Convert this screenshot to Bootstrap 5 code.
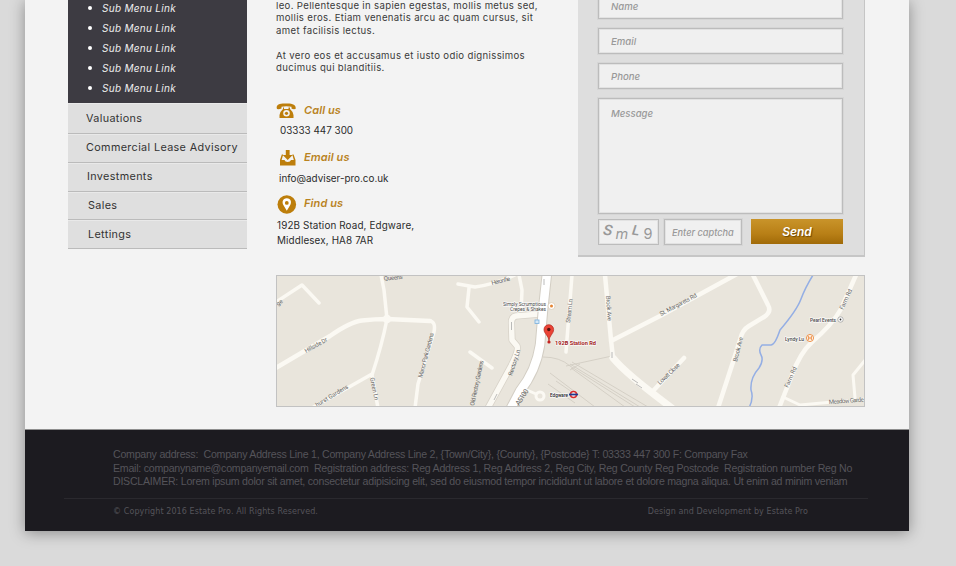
<!DOCTYPE html>
<html lang="en">
<head>
<meta charset="utf-8">
<meta name="viewport" content="width=device-width, initial-scale=1">
<title>Estate Pro - Contact</title>
<link href="https://cdn.jsdelivr.net/npm/bootstrap@5.3.0/dist/css/bootstrap.min.css" rel="stylesheet">
<style>
body{background:#dadada;font-family:Inter,"Open Sans",sans-serif;font-size:9.6px;color:#3a3a3a;height:566px;overflow:hidden}
.sheet{width:884px;height:531px;margin-left:25px;background:#f3f3f3;box-shadow:0 2px 14px rgba(0,0,0,.36)}
.main-area{height:430px;padding-left:43px;border-bottom:1px solid #8e8e8e}
.side{width:179px}
.submenu{background:#3d3b42;height:103px;color:#eee;font-style:italic;font-size:10px;letter-spacing:.29px;overflow:hidden}
.submenu ul{margin-top:-2px}
.submenu li{height:20.1px;line-height:20px;gap:10.5px;padding-left:19.500px}
.submenu li::before{content:"";width:4px;height:4px;border-radius:50%;background:#fff}
.side .list-group-item{background:#dfdfdf;color:#333;font-size:10.8px;line-height:14px;letter-spacing:.36px;padding:0 0 0 19px;height:28.8px;border:0;border-bottom:1px solid #bbb;border-top:1px solid #e9e9e9;display:flex;align-items:center;white-space:nowrap}
.side .list-group-item:first-child{height:31px}
.side .list-group-item:nth-child(-n+2){padding-left:18px}
.side .list-group-item:nth-child(n+4){padding-left:20px}
.side .list-group-item:last-child{border-bottom:1px solid #bbb}
.content{margin-left:29px;width:590px}
.upper{height:275px}
.copy{width:302px}
.copy p{line-height:12.45px;margin:0 0 12.4px;letter-spacing:.34px;white-space:nowrap}
.copy .lead-in{margin-top:0}
.ways{padding-top:12px}
.way h2{font-size:11px;font-style:italic;font-weight:600;color:#b9831f;margin:0;letter-spacing:.1px}
.way .head{height:24px;gap:7px}
.way .head svg{width:21px;height:20px}
.way .txt{font-size:9.9px;line-height:14.5px;white-space:nowrap;color:#2b2b2b}
.way .info-line{padding-left:3px;padding-top:1px}
.way .addr{padding:2px 0 0 1px;letter-spacing:.12px}
.way.second{margin-top:8px}
.way.third{margin-top:7px}
.enquiry{width:287px;height:257px;background:#dedede;border-right:1px solid #c5c5c5;border-bottom:2px solid #c6c6c6;padding:0 21px 0 20px}
.enquiry .form-control{border:1px solid #bcbcbc;outline:1px solid rgba(0,0,0,.035);outline-offset:0;border-radius:0;background:#f0f0f0;font-size:9.6px;font-style:italic;font-weight:500;padding:0 12px;height:26px;min-height:0;line-height:14px;resize:none;box-shadow:inset 0 0 0 1px #e2e2e2}
.enquiry .form-control::placeholder{color:#999;opacity:1}
.enquiry textarea.form-control{height:116px;padding-top:8px}
.enquiry .first-field{margin-top:-7px}
.enquiry .mt-field{margin-top:9px}
.captcha-row{margin-top:5px;gap:5px}
.code{width:61px;height:26px;border:1px solid #bcbcbc;box-shadow:inset 0 0 0 1px #e2e2e2;background:#f0f0f0}
.enquiry .form-control.cap{width:78px;padding:0 0 0 7px;font-size:9.2px}
.btn-send{width:92px;height:25px;padding:0;border-radius:0;border:0;background:linear-gradient(#c9942a,#b87f16 60%,#a06a08);color:#fff;font-size:12px;line-height:26px;font-weight:600;font-style:italic;text-shadow:1px 1px 1px #6d4700}
.map svg{display:block}
.foot{height:101px;background:#1c1b20;color:#55545a;font-family:"Liberation Sans",Arial,sans-serif;font-size:10.6px;padding:18px 0 0 88px}
.foot .legal{line-height:13.6px;white-space:pre;letter-spacing:-.238px}
.foot .bottom{margin:9px 41px 0 -49px;border-top:1px solid #2a292e;padding:7px 60px 0 49px;font-family:"DejaVu Sans",Verdana,sans-serif;font-size:8px;line-height:12px;letter-spacing:.09px}
</style>
<script src="https://cdn.jsdelivr.net/npm/bootstrap@5.3.0/dist/js/bootstrap.bundle.min.js"></script>
</head>
<body>
<div class="sheet">
  <main class="main-area d-flex">
    <nav class="side">
      <div class="submenu">
        <ul class="list-unstyled mb-0">
          <li class="d-flex align-items-center">Sub Menu Link</li>
          <li class="d-flex align-items-center">Sub Menu Link</li>
          <li class="d-flex align-items-center">Sub Menu Link</li>
          <li class="d-flex align-items-center">Sub Menu Link</li>
          <li class="d-flex align-items-center">Sub Menu Link</li>
        </ul>
      </div>
      <div class="list-group list-group-flush rounded-0">
        <a class="list-group-item">Valuations</a>
        <a class="list-group-item">Commercial Lease Advisory</a>
        <a class="list-group-item">Investments</a>
        <a class="list-group-item">Sales</a>
        <a class="list-group-item">Lettings</a>
      </div>
    </nav>
    <div class="content">
      <div class="upper d-flex">
        <div class="copy">
          <p class="lead-in">leo. Pellentesque in sapien egestas, mollis metus sed,<br>mollis eros. Etiam venenatis arcu ac quam cursus, sit<br>amet facilisis lectus.</p>
          <p>At vero eos et accusamus et iusto odio dignissimos<br>ducimus qui blanditiis.</p>
          <div class="ways">
            <div class="way">
              <div class="head d-flex align-items-center">
                <svg viewBox="0 0 21 20"><path fill="#bd7e0b" fill-rule="evenodd" d="M1 8C-.8 3 5 2.500 10 2.500S20.800 3 19.500 8Q17 8.500 15.500 7.500V5.800Q10 4.500 5.500 5.800V7.500Q3 8.500 1 8ZM7 6.500H8V8H12.500V6.500H14V8Q16.500 10 17.500 14V17H3.500V14Q4.500 10 7 8ZM10.500 9A3.300 3.300 0 1 0 10.500 15.600A3.300 3.300 0 1 0 10.500 9Z"/><circle cx="10.500" cy="12.300" r="1.600" fill="#bd7e0b"/></svg>
                <h2>Call us</h2>
              </div>
              <div class="txt ps-1">03333 447 300</div>
            </div>
            <div class="way second">
              <div class="head d-flex align-items-center">
                <svg viewBox="0 0 21 20"><path fill="#bd7e0b" d="M9.800 2H13.600V7H16.700L11.700 12 6.700 7H9.800ZM5.800 6.500H7.200L5.600 12H8.500Q9 14 11.700 14T15 12H17.800L16.300 6.500H17.600L19.500 12V17.500H4V12Z"/></svg>
                <h2>Email us</h2>
              </div>
              <div class="txt info-line">info@adviser-pro.co.uk</div>
            </div>
            <div class="way third">
              <div class="head d-flex align-items-center">
                <svg viewBox="0 0 21 20"><circle cx="10.800" cy="10.500" r="9.300" fill="#bd7e0b"/><path fill="#fff" fill-rule="evenodd" d="M10.800 4.200C6.500 4.200 5.700 8.500 7.500 11.300L10.800 16.700 14.100 11.300C15.900 8.500 15.100 4.200 10.800 4.200ZM10.800 7A1.900 1.900 0 1 1 10.800 10.800A1.900 1.900 0 1 1 10.800 7Z"/></svg>
                <h2>Find us</h2>
              </div>
              <div class="txt addr">192B Station Road, Edgware,<br>Middlesex, HA8 7AR</div>
            </div>
          </div>
        </div>
        <form class="enquiry">
          <input class="form-control first-field" placeholder="Name">
          <input class="form-control mt-field" placeholder="Email">
          <input class="form-control mt-field" placeholder="Phone">
          <textarea class="form-control mt-field" placeholder="Message"></textarea>
          <div class="d-flex captcha-row">
            <svg class="code p-0" viewBox="0 0 57 22" fill="#999" font-style="italic"><text x="4" y="14" font-size="14" font-weight="600" transform="rotate(8 8 10)">S</text><text x="16" y="18" font-size="14">m</text><text x="32" y="14" font-size="13" font-weight="600" transform="rotate(8 36 9)">L</text><text x="43" y="18" font-size="14" font-style="normal">9</text></svg>
            <input class="form-control cap" placeholder="Enter captcha">
            <button type="button" class="btn btn-send ms-auto">Send</button>
          </div>
        </form>
      </div>
      <div class="map">
        <svg width="590" height="133" viewBox="276 275 590 133" font-family="Roboto,sans-serif" font-size="6" fill="#666">
          <rect x="276" y="275" width="589" height="132" fill="#e9e5dc"/>
          <g fill="none" stroke="#cfcac0" stroke-width=".8">
            <path d="M543 357Q560 357 570 366L635 407M570 364L640 407M571 368L625 407M572 362L648 407M550 373L595 407M548 384L575 403M556 381L572 392M566 366L612 356M570 370L580 364"/>
          </g>
          <g fill="none" stroke="#fbf9f3" stroke-linejoin="round" stroke-linecap="round">
            <path stroke-width="3.500" d="M276 302L302 285 319 303M381 275L384 290 387 319M387 319Q382 345 372 375L378 408M372 374L312 408M430 321Q436 322 434 332L418 384 415 408"/>
            <path stroke-width="4.500" d="M274 369L330 336Q350 322 362 320.500 375 319 387 319L430 321"/>
            <circle cx="387" cy="319" r="3" stroke-width="2.500"/>
            <path stroke-width="3.500" d="M458 284L475 287Q492 285 515 275M469 288L467 307 479 322M470 352L492 368M519 275L522 290 521 314M572 275L566 352"/>
            <path stroke-width="4.500" d="M605 275L611 340 613 358M611 341L660 316 737 274M653 391L684 358"/>
            <path stroke-width="7" d="M613 358Q626 374 672 408"/>
            <path stroke-width="4.500" d="M753 275L768 305Q772 312 764 317L749 326Q742 330 740 340L733 362 718 408"/>
            <path stroke-width="4.500" d="M856 275L841 309Q832 325 812 342 800 353 792 375L779 408"/>
            <path stroke-width="3" d="M783 397L800 405 866 399M866 359L853 375 855 398"/>
            <path stroke="#d7d2c8" stroke-width="7" d="M540 314L516 316Q511 317 511.500 324L512 340 517 346Q519 350 511 366L488 408"/>
            <path stroke-width="5.500" d="M540 314L516 316Q511 317 511.500 324L512 340 517 346Q519 350 511 366L488 408"/>
            <path stroke="#d3cec4" stroke-width="10.500" d="M547 273L543 310 540 345Q536 371 520 391L510 410"/>
            <path stroke="#fff" stroke-width="8.500" d="M547 273L543 310 540 345Q536 371 520 391L510 410"/>
            <circle cx="540" cy="396" r="4" stroke-width="3"/><path stroke-width="3" d="M527 390L536 394"/>
            <path stroke="#94aee4" stroke-width="1.500" d="M813 275Q805 288 801 299T780 330Q775 345 771 345H762Q758 349 761 355 764 360 759 368 750 378 751 390 754 398 749 408"/>
          </g>
          <g stroke="#aaa" stroke-width=".8" fill="none"><path d="M544 279V285M511.500 322V330M612 352V358M632 379L638 383M636 384L642 388M497 394L494 400"/></g>
          <text x="278" y="306" transform="rotate(-38 278 306)">ge</text>
          <text x="384" y="280.500" textLength="19" transform="rotate(-5 384 280)">Queens</text>
          <text x="306" y="353" textLength="25" transform="rotate(-29 306 353)">Hillside Dr</text>
          <text x="317" y="407" textLength="37" transform="rotate(-31 317 407)">hurst Gardens</text>
          <text x="370" y="378" textLength="23" transform="rotate(78 370 378)">Green Ln</text>
          <text x="422" y="378" textLength="46" transform="rotate(-75 422 378)">Manor Park Gardens</text>
          <text x="492" y="285" textLength="19" transform="rotate(-14 492 285)">Heronfie</text>
          <text x="474" y="406" textLength="46" transform="rotate(-78 474 406)">Old Rectory Gardens</text>
          <text x="512" y="376" textLength="27" transform="rotate(-72 512 376)">Rectory Ln</text>
          <text x="519" y="406" font-size="7" textLength="18" transform="rotate(-57 519 406)">A5100</text>
          <text x="570" y="323" textLength="24" transform="rotate(-84 570 323)">Stream Ln</text>
          <text x="606" y="296" textLength="25" transform="rotate(86 606 296)">Brook Ave</text>
          <text x="661" y="316" textLength="41" transform="rotate(-28 661 316)">St. Margarets Rd</text>
          <text x="660" y="385" textLength="28" transform="rotate(-44 660 385)">Lovatt Close</text>
          <text x="737" y="362" textLength="25" transform="rotate(-76 737 362)">Brook Ave</text>
          <text x="788" y="388" textLength="22" transform="rotate(-66 788 388)">Farm Rd</text>
          <text x="843" y="310" textLength="22" transform="rotate(-65 843 310)">Farm Rd</text>
          <text x="829" y="404" textLength="35" transform="rotate(-4 829 404)">Meadow Garde</text>
          <g fill="#444" stroke="#fff" stroke-width="1.200" paint-order="stroke" font-size="5.500">
            <text x="503" y="305.500" textLength="43" lengthAdjust="spacingAndGlyphs">Simply Scrumptious</text><text x="510" y="311" textLength="36" lengthAdjust="spacingAndGlyphs">Crepes &amp; Shakes</text>
            <text x="810" y="322" textLength="26" lengthAdjust="spacingAndGlyphs" font-weight="500">Pearl Events</text><text x="785" y="340.500" textLength="19" lengthAdjust="spacingAndGlyphs" font-weight="500">Lyndy Lu</text>
            <text x="550" y="396.500" textLength="18" lengthAdjust="spacingAndGlyphs" font-weight="500" fill="#222">Edgware</text>
            <text x="555" y="344.500" textLength="41" lengthAdjust="spacingAndGlyphs" font-weight="700" font-size="6" fill="#9e2020">192B Station Rd</text>
          </g>
          <circle cx="551.500" cy="306" r="3.500" fill="#fff" stroke="#d8c8b0" stroke-width=".7"/><circle cx="551.500" cy="306" r="1.500" fill="#e58534"/>
          <circle cx="810" cy="338" r="3.500" fill="#fff" stroke="#ec8c40" stroke-width="1"/><path d="M808.700 336V340M811.300 336V340M808.700 338H811.300" stroke="#ec8c40"/>
          <circle cx="840.500" cy="319.500" r="2.700" fill="#fff" stroke="#999" stroke-width=".7"/><circle cx="840.500" cy="319.500" r=".9" fill="#333"/>
          <rect x="535" y="320" width="4" height="3.500" fill="#d5e8f7" stroke="#75aede" stroke-width=".8"/>
          <circle cx="573.500" cy="394.500" r="3" fill="#fff" stroke="#d92c2c" stroke-width="1.500"/><path d="M569 394.500H578" stroke="#213a8f" stroke-width="1.800"/>
          <path d="M549 341C548.500 335 544 334 544 329.500A4.800 4.800 0 0 1 553.600 329.500C553.600 334 549.500 335 549 341Z" fill="#ea4335" stroke="#b3261e" stroke-width=".7"/><circle cx="548.800" cy="329.500" r="1.700" fill="#521510"/><circle cx="549" cy="342" r="1.600" fill="#c5221f"/>
          <path fill="#f3f3f3" d="M865 275H866V408H276V407H865Z"/>
          <rect x="276.500" y="275.500" width="588" height="131" fill="none" stroke="#c2c2c2"/>
        </svg>
      </div>
    </div>
  </main>
  <footer class="foot">
    <div class="legal">Company address:  Company Address Line 1, Company Address Line 2, {Town/City}, {County}, {Postcode} T: 03333 447 300 F: Company Fax
Email: companyname@companyemail.com  Registration address: Reg Address 1, Reg Address 2, Reg City, Reg County Reg Postcode  Registration number Reg No
DISCLAIMER: Lorem ipsum dolor sit amet, consectetur adipisicing elit, sed do eiusmod tempor incididunt ut labore et dolore magna aliqua. Ut enim ad minim veniam</div>
    <div class="bottom d-flex justify-content-between"><span>© Copyright 2016 Estate Pro. All Rights Reserved.</span><span>Design and Development by Estate Pro</span></div>
  </footer>
</div>
</body>
</html>
